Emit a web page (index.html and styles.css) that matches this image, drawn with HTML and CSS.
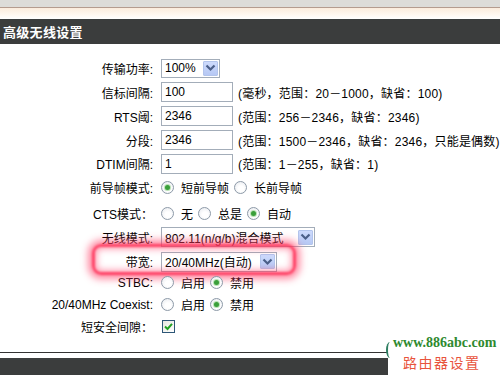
FILE: index.html
```html
<!DOCTYPE html>
<html lang="zh-CN">
<head>
<meta charset="utf-8">
<title>高级无线设置</title>
<link rel="stylesheet" href="styles.css">
</head>
<body>
<div class="page">
  <div class="topstrip"></div>
  <div class="fade"></div>
  <div class="titlebar">高级无线设置</div>

  <div class="form">
    <div class="row">
      <div class="label">传输功率:</div>
      <div class="ctrl">
        <span class="select s-power"><span class="stxt">100%</span><span class="arrow"><svg width="11" height="8" viewBox="0 0 11 8"><path d="M1.5 1.5l4 4 4-4" fill="none" stroke="#4b5f88" stroke-width="2.2"/></svg></span></span>
      </div>
    </div>
    <div class="row">
      <div class="label">信标间隔:</div>
      <div class="ctrl"><span class="input">100</span><span class="hint">(毫秒，范围：20－1000，缺省：100)</span></div>
    </div>
    <div class="row">
      <div class="label">RTS阈:</div>
      <div class="ctrl"><span class="input">2346</span><span class="hint">(范围：256－2346，缺省：2346)</span></div>
    </div>
    <div class="row">
      <div class="label">分段:</div>
      <div class="ctrl"><span class="input">2346</span><span class="hint">(范围：1500－2346，缺省：2346，只能是偶数)</span></div>
    </div>
    <div class="row">
      <div class="label">DTIM间隔:</div>
      <div class="ctrl"><span class="input">1</span><span class="hint">(范围：1－255，缺省：1)</span></div>
    </div>
    <div class="row">
      <div class="label">前导帧模式:</div>
      <div class="ctrl opts"><span class="radio on"></span><span class="opt">短前导帧</span><span class="radio"></span><span class="opt">长前导帧</span></div>
    </div>
    <div class="row">
      <div class="label">CTS模式：</div>
      <div class="ctrl opts"><span class="radio"></span><span class="opt">无</span><span class="radio"></span><span class="opt">总是</span><span class="radio on"></span><span class="opt">自动</span></div>
    </div>
    <div class="row">
      <div class="label">无线模式:</div>
      <div class="ctrl">
        <span class="select s-mode"><span class="stxt">802.11(n/g/b)混合模式</span><span class="arrow"><svg width="11" height="8" viewBox="0 0 11 8"><path d="M1.5 1.5l4 4 4-4" fill="none" stroke="#4b5f88" stroke-width="2.2"/></svg></span></span>
      </div>
    </div>
    <div class="row bw">
      <div class="label">带宽:</div>
      <div class="ctrl">
        <span class="select s-bw"><span class="stxt">20/40MHz(自动)</span><span class="arrow"><svg width="11" height="8" viewBox="0 0 11 8"><path d="M1.5 1.5l4 4 4-4" fill="none" stroke="#4b5f88" stroke-width="2.2"/></svg></span></span>
      </div>
      <div class="glow"></div>
    </div>
    <div class="row">
      <div class="label">STBC:</div>
      <div class="ctrl opts"><span class="radio"></span><span class="opt">启用</span><span class="radio on"></span><span class="opt">禁用</span></div>
    </div>
    <div class="row">
      <div class="label">20/40MHz Coexist:</div>
      <div class="ctrl opts"><span class="radio"></span><span class="opt">启用</span><span class="radio on"></span><span class="opt">禁用</span></div>
    </div>
    <div class="row">
      <div class="label">短安全间隙：</div>
      <div class="ctrl"><span class="check"><svg width="11" height="11" viewBox="0 0 11 11"><path d="M2 5.5l2.5 2.5L9 2.8" fill="none" stroke="#21a121" stroke-width="2"/></svg></span></div>
    </div>
  </div>

  <div class="rule"></div>
  <div class="footbar"></div>

  <div class="watermark">
    <span class="arc"></span>
    <div class="wm-url">www.886abc.com</div>
    <div class="wm-cn">路由器设置</div>
  </div>
</div>
</body>
</html>
```

FILE: styles.css
```css
* { box-sizing: border-box; }
html, body { margin: 0; padding: 0; background: #fff; }
body {
  width: 500px;
  height: 375px;
  overflow: hidden;
  font-family: "Liberation Sans", "Noto Sans CJK SC", sans-serif;
  font-size: 12px;
  color: #000;
}
.page {
  position: relative;
  width: 500px;
  height: 375px;
  display: flex;
  flex-direction: column;
}
.topstrip {
  height: 8px;
  background: #dddcd8;
  border-bottom: 1px solid #b59c8e;
}
.fade {
  height: 11px;
  background: linear-gradient(#fbecdc, #fff8f0 60%, #fff);
}
.titlebar {
  height: 25px;
  background: #3b3d3d;
  color: #fff;
  font-family: "Noto Sans CJK SC", sans-serif;
  font-weight: bold;
  font-size: 13px;
  line-height: 25px;
  padding-left: 3px;
  letter-spacing: 0.3px;
}
.form {
  margin-top: 12px;
  display: flex;
  flex-direction: column;
}
.row {
  display: grid;
  grid-template-columns: 153px auto;
  column-gap: 8px;
  align-items: center;
  height: 24px;
}
.row:nth-child(5) { height: 23px; }
.row:nth-child(6) { height: 25px; }
.row:nth-child(7) { height: 26px; }
.row:nth-child(8) { height: 22px; }
.row:nth-child(9) { height: 24px; }
.row:nth-child(10) { height: 21px; }
.row:nth-child(11) { height: 23px; }
.row:nth-child(12) { height: 20px; }

.label {
  text-align: right;
  white-space: nowrap;
}
.ctrl {
  display: flex;
  align-items: center;
  white-space: nowrap;
}
.input {
  width: 72px;
  height: 20px;
  border: 1px solid #a3adb9;
  padding-left: 3px;
  line-height: 18px;
  background: #fff;
}
.hint { margin-left: 5px; letter-spacing: 0.2px; }

.select {
  display: inline-flex;
  align-items: center;
  justify-content: space-between;
  height: 19px;
  border: 1px solid #a3adb9;
  padding-left: 3px;
  padding-right: 1px;
  background: #fff;
}
.s-power { width: 59px; }
.s-mode { width: 154px; height: 20px; }
.s-bw { width: 116px; height: 20px; }
.arrow {
  width: 15px;
  height: 15px;
  display: flex;
  align-items: center;
  justify-content: center;
  background: linear-gradient(#cddafc, #b6c8f4);
  border: 1px solid #b2c4ec;
  border-radius: 1px;
}

.opts .radio {
  width: 13px;
  height: 13px;
  border-radius: 50%;
  border: 1px solid #8d9aa8;
  background: radial-gradient(circle at 55% 60%, #ffffff 30%, #e4e7ec 100%);
  margin-left: 0;
  margin-right: 7px;
  position: relative;
  flex: none;
}
.opts .radio.on::after {
  content: "";
  position: absolute;
  left: 3px;
  top: 3px;
  width: 5px;
  height: 5px;
  border-radius: 50%;
  background: #3a9f3a;
  box-shadow: 0 0 0 1px #b9e2b5;
}
.opts .opt { margin-right: 5px; }

.check {
  width: 13px;
  height: 13px;
  margin-left: 1px;
  border: 1px solid #2d5677;
  background: linear-gradient(135deg, #e6e6e0, #fff);
  display: flex;
  align-items: center;
  justify-content: center;
}

.bw .label { grid-column: 1; grid-row: 1; }
.bw .ctrl { grid-column: 2; grid-row: 1; }
.bw .glow {
  grid-column: 1 / span 2;
  grid-row: 1;
  align-self: start;
  margin-left: 92px;
  margin-top: -4px;
  width: 204px;
  height: 31px;
  border: 3px solid rgba(255, 45, 85, 0.9);
  border-radius: 9px;
  box-shadow: 0 0 7px 4px rgba(255, 60, 100, 0.6), inset 0 0 6px 2px rgba(255, 70, 110, 0.55);
  filter: blur(1px);
  pointer-events: none;
}

.rule {
  margin-top: 16px;
  height: 1px;
  background: #333;
}
.footbar {
  margin-top: 5px;
  flex: 1;
  background: #3b3d3d;
}

.watermark {
  position: absolute;
  right: 0;
  bottom: 0;
  width: 112px;
  height: 43px;
  background: #fff;
  padding-left: 5px;
}
.arc {
  position: absolute;
  left: -2px;
  top: 10px;
  width: 8px;
  height: 16px;
  border-left: 2px solid #2f7f62;
  border-radius: 50%;
}
.wm-url {
  font-family: "Liberation Serif", serif;
  font-weight: bold;
  font-size: 14px;
  color: #2f8a2f;
  line-height: 16px;
  margin-top: 3px;
}
.wm-cn {
  font-family: "Noto Sans CJK SC", sans-serif;
  font-size: 14px;
  color: #e8533c;
  line-height: 18px;
  margin-left: 10px;
  margin-top: 2px;
  letter-spacing: 1.5px;
}
```
